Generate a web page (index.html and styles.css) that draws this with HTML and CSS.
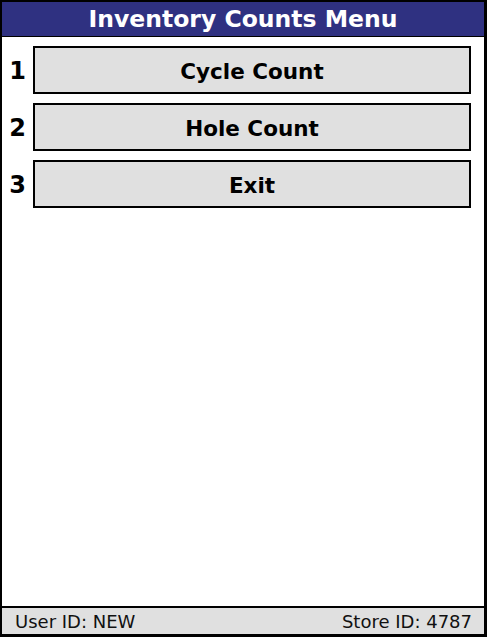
FILE: index.html
```html
<!DOCTYPE html>
<html>
<head>
<meta charset="utf-8">
<link rel="stylesheet" href="styles.css">
</head>
<body>
<div class="frame">
  <header class="title">Inventory Counts Menu</header>
  <main class="menu">
    <div class="row"><span class="num">1</span><button class="btn">Cycle Count</button></div>
    <div class="row"><span class="num">2</span><button class="btn">Hole Count</button></div>
    <div class="row"><span class="num">3</span><button class="btn">Exit</button></div>
  </main>
  <footer class="status">
    <span>User ID: NEW</span>
    <span>Store ID: 4787</span>
  </footer>
</div>
</body>
</html>
```
FILE: styles.css
```css
html, body {
  margin: 0;
  padding: 0;
  background: #fff;
}
.frame {
  box-sizing: border-box;
  width: 487px;
  height: 637px;
  border-style: solid;
  border-color: #000;
  border-width: 2px 3px 3px 2px;
  display: flex;
  flex-direction: column;
  font-family: "DejaVu Sans", Verdana, sans-serif;
}
.title {
  height: 34px;
  background: #2f3181;
  color: #fff;
  font-weight: bold;
  font-size: 23.5px;
  display: flex;
  align-items: center;
  justify-content: center;
  border-bottom: 1px solid #000;
}
.menu {
  flex: 1;
  display: flex;
  flex-direction: column;
  gap: 9px;
  padding: 9px 13px 0 0;
}
.row {
  display: flex;
  align-items: center;
}
.num {
  width: 31px;
  padding-top: 2px;
  text-align: center;
  font-weight: bold;
  font-size: 24px;
  color: #000;
}
.btn {
  flex: 1;
  height: 48px;
  box-sizing: border-box;
  border: 2px solid #000;
  background: #e0e0e0;
  font-family: "DejaVu Sans", Verdana, sans-serif;
  font-weight: bold;
  font-size: 21.5px;
  color: #000;
  padding: 3px 0 0;
  margin: 0;
}
.status {
  height: 26px;
  border-top: 2px solid #000;
  background: #e0e0e0;
  display: flex;
  justify-content: space-between;
  align-items: center;
  padding: 0 12px 0 13px;
  font-size: 18px;
  color: #111;
}
```
